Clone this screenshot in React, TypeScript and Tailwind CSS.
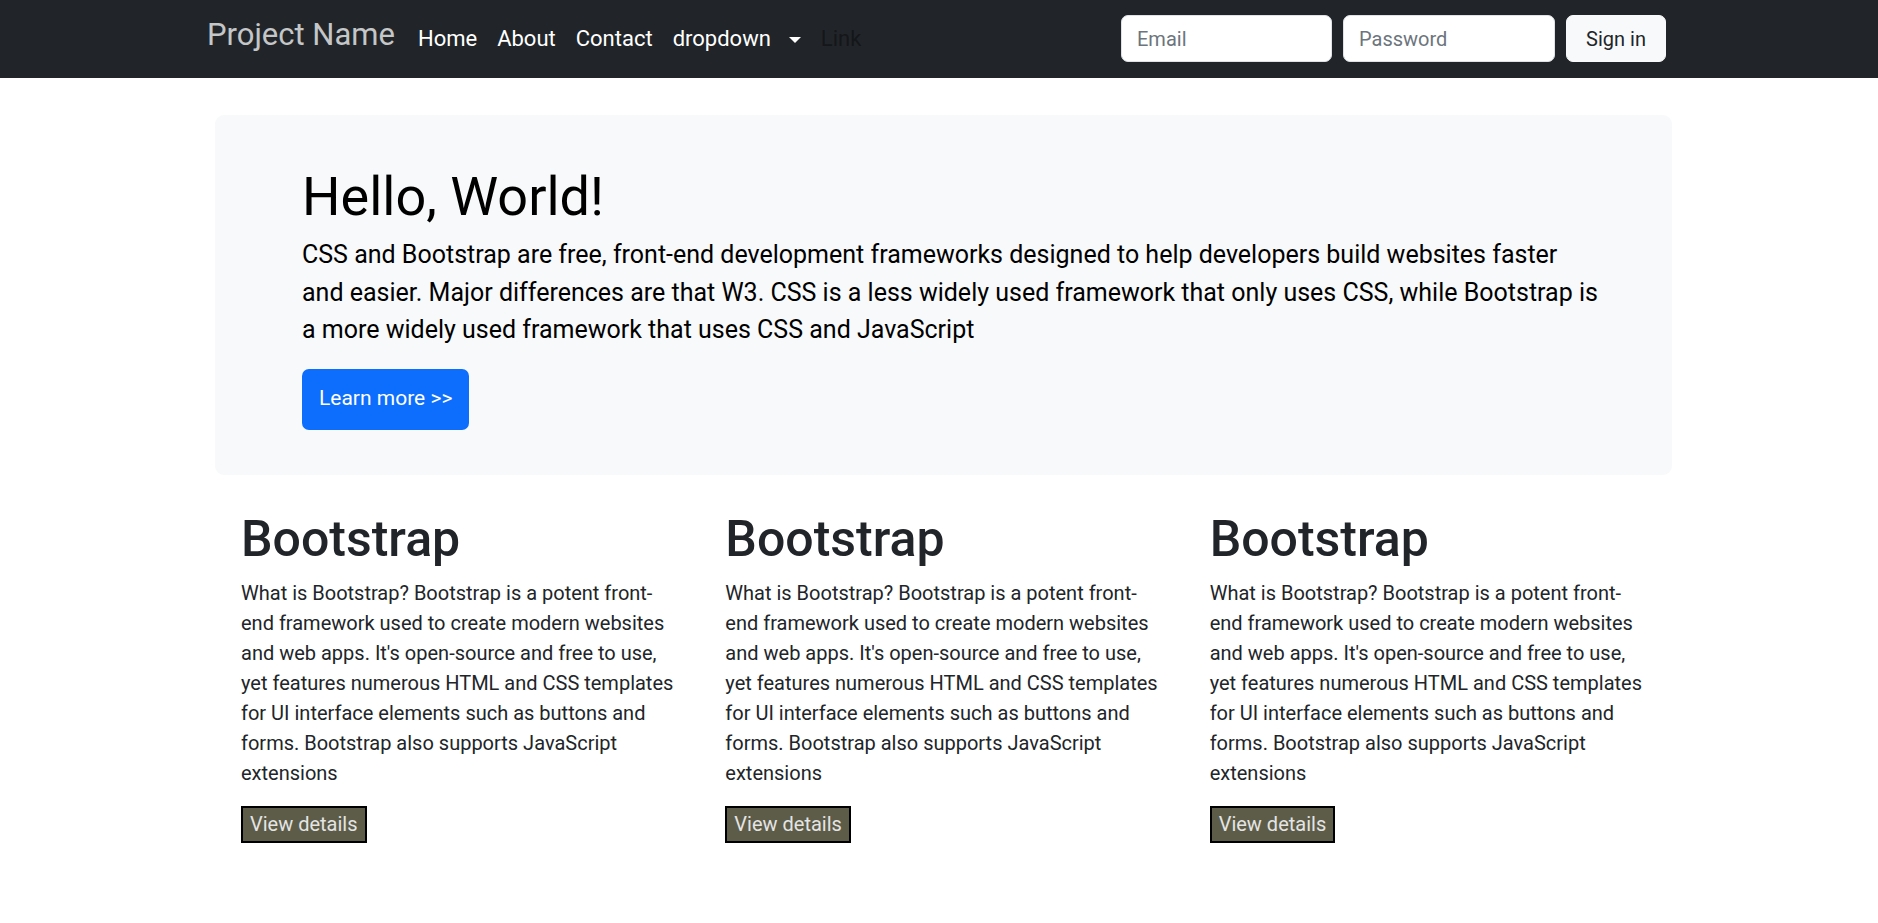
import React from "react";

const blurb =
    "What is Bootstrap? Bootstrap is a potent front-end framework used to create modern websites and web apps. It's open-source and free to use, yet features numerous HTML and CSS templates for UI interface elements such as buttons and forms. Bootstrap also supports JavaScript extensions";

export default function App() {
    return (
        <div className="min-h-screen bg-white font-[Roboto,'Liberation_Sans',sans-serif] text-[#212529]">
            <nav className="h-[78px] bg-[#212529]">
                <div className="ml-[207px] mr-[212px] flex h-full items-start justify-between">
                    <div className="flex items-start">
                        <a href="#" className="mr-[13px] mt-[19px] text-[31px] leading-[31px] text-[#c4c6c8]">
                            Project Name
                        </a>
                        <ul className="mt-[28px] flex text-[22px] leading-[22px] text-white">
                            <li className="px-[10px]">Home</li>
                            <li className="px-[10px]">About</li>
                            <li className="px-[10px]">Contact</li>
                            <li className="flex items-center px-[10px]">
                                <span className="pr-[4px]">dropdown</span>
                                <span className="ml-[14px] mt-[2px] border-x-[6px] border-t-[6px] border-x-transparent border-t-white" />
                            </li>
                            <li className="px-[10px] text-[#141619]">Link</li>
                        </ul>
                    </div>
                    <form className="mt-[15px] flex gap-[11px]">
                        <input
                            type="text"
                            placeholder="Email"
                            className="h-[47px] w-[211px] rounded-[7px] border border-[#dee2e6] bg-white px-[15px] text-[20px] text-[#212529] placeholder:text-[#6c757d]"
                        />
                        <input
                            type="password"
                            placeholder="Password"
                            className="h-[47px] w-[212px] rounded-[7px] border border-[#dee2e6] bg-white px-[15px] text-[20px] text-[#212529] placeholder:text-[#6c757d]"
                        />
                        <button
                            type="button"
                            className="h-[47px] w-[100px] rounded-[7px] border border-[#f8f9fa] bg-[#f8f9fa] text-[20px] text-[#212529]"
                        >
                            Sign in
                        </button>
                    </form>
                </div>
            </nav>

            <main className="ml-[215px] pt-[37px]">
                <section className="w-[1457px] rounded-[9px] bg-[#f8f9fa] pb-[45px] pl-[87px] pr-[72px] pt-[49px] text-black">
                    <h1 className="mb-[7px] text-[54px] font-normal leading-[65px]">Hello, World!</h1>
                    <p className="text-[25px] leading-[37.5px]">
                        CSS and Bootstrap are free, front-end development frameworks designed to help developers build
                        websites faster and easier. Major differences are that W3. CSS is a less widely used framework
                        that only uses CSS, while Bootstrap is a more widely used framework that uses CSS and JavaScript
                    </p>
                    <button
                        type="button"
                        className="mt-[20px] flex h-[61px] items-center rounded-[7px] bg-[#0d6efd] px-[17px] text-[21px] text-white"
                    >
                        Learn more &gt;&gt;
                    </button>
                </section>

                <div className="grid w-[1453px] grid-cols-3 pt-[34px]">
                    {[0, 1, 2].map((i) => (
                        <div key={i} className="px-[26px]">
                            <h2 className="mb-[9px] text-[50px] font-medium leading-[60px]">Bootstrap</h2>
                            <p className="text-[20px] leading-[30px]">{blurb}</p>
                            <button
                                type="button"
                                className="mt-[18px] h-[37px] border-2 border-black bg-[#5d5c48] px-[7px] text-[20px] leading-[30px] text-[#e4e4e4]"
                            >
                                View details
                            </button>
                        </div>
                    ))}
                </div>
            </main>
        </div>
    );
}
